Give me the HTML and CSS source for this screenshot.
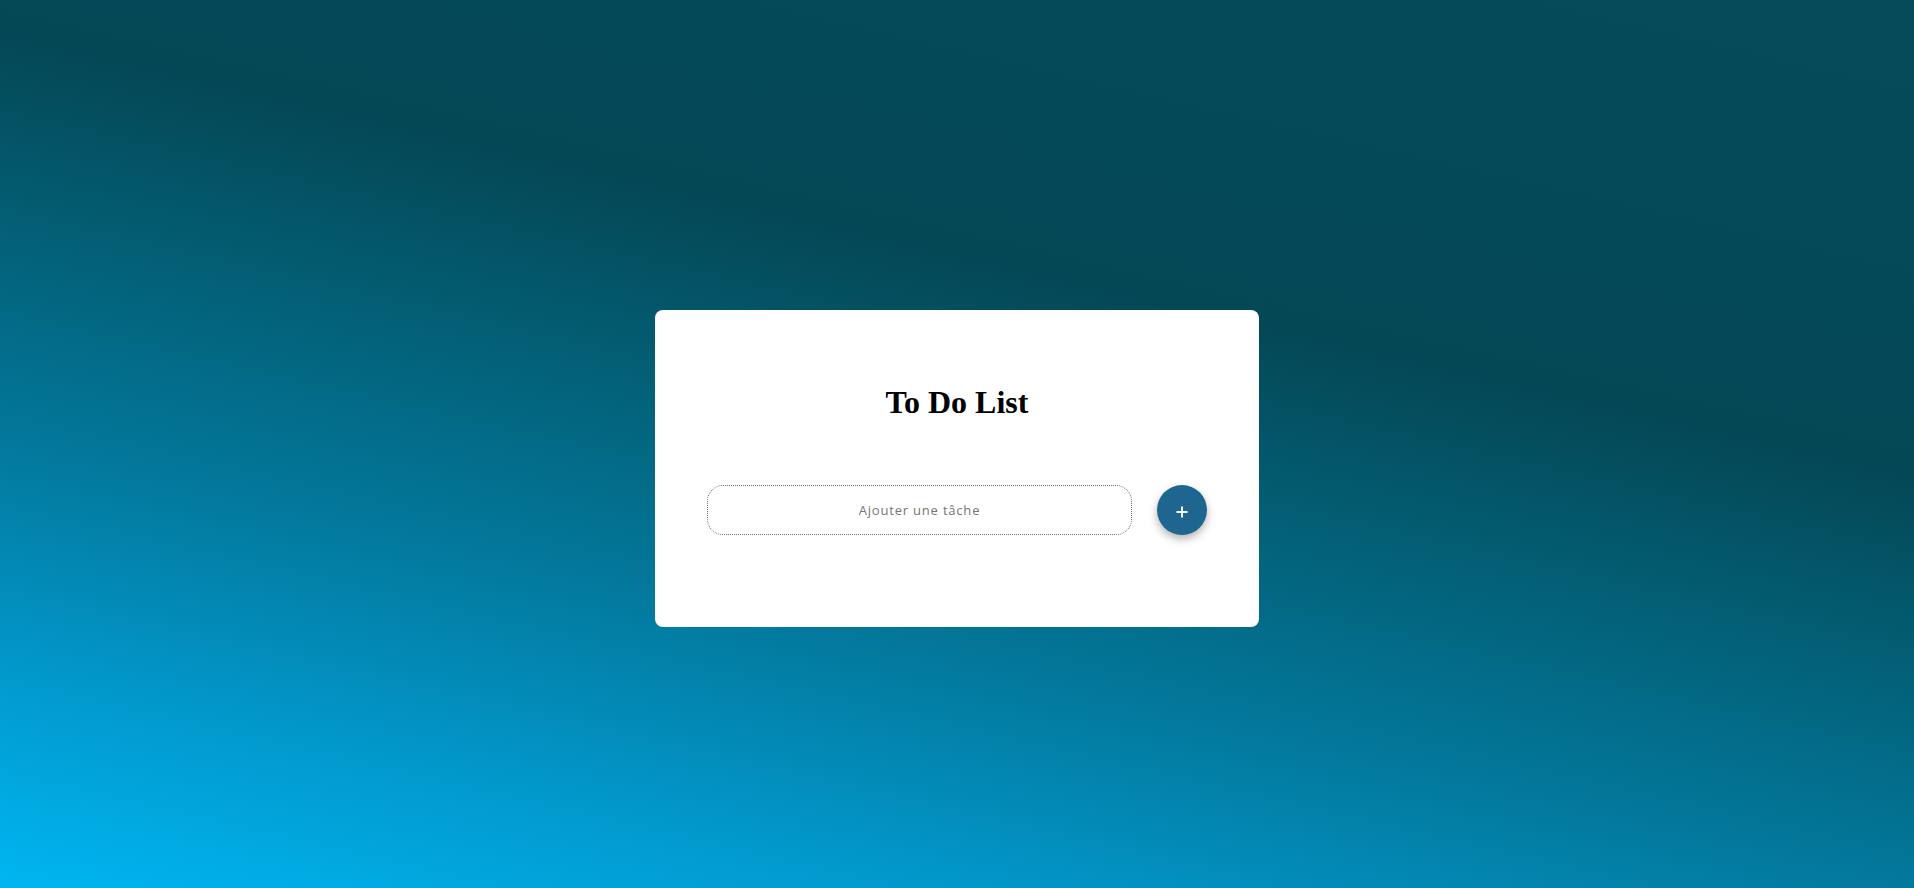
FILE: index.html
```html
<!DOCTYPE html>
<html lang="fr">
<head>
<meta charset="utf-8">
<title>To Do List</title>
<link rel="stylesheet" href="styles.css">
</head>
<body>
<main class="page">
  <section class="card">
    <h1 class="title">To Do List</h1>
    <form class="row" onsubmit="return false;">
      <input class="task-input" type="text" placeholder="Ajouter une tâche">
      <button class="add-btn" type="submit" aria-label="Ajouter">
        <svg width="12" height="12" viewBox="0 0 12 12"><path d="M6 0.5V11.5M0.5 6H11.5" stroke="#fff" stroke-width="1.8" fill="none"/></svg>
      </button>
    </form>
  </section>
</main>
</body>
</html>
```
FILE: styles.css
```css
html, body {
  margin: 0;
  height: 100%;
}
body {
  background: linear-gradient(13deg, #00b6f1 0%, #0299cd 16%, #037ba0 32%, #03627a 48%, #044856 64%, #054b5a 100%);
  font-family: "Open Sans", "Noto Sans", sans-serif;
}
.page {
  box-sizing: border-box;
  height: 100vh;
  display: flex;
  justify-content: center;
  align-items: flex-start;
  padding-top: 310px;
}
.card {
  box-sizing: border-box;
  width: 604px;
  height: 317px;
  background: #fff;
  border-radius: 8px;
  padding: 75px 52px 92px;
}
.title {
  margin: 0;
  font-family: "Liberation Serif", "Times New Roman", serif;
  font-size: 32px;
  font-weight: bold;
  line-height: 35px;
  text-align: center;
  color: #000;
}
.row {
  margin: 65px 0 0;
  display: flex;
  align-items: center;
  gap: 25px;
}
.task-input {
  box-sizing: border-box;
  width: 425px;
  height: 50px;
  border: 1px dotted #6f6f6f;
  border-radius: 16px;
  outline: none;
  text-align: center;
  font-family: "Open Sans", "Noto Sans", sans-serif;
  font-size: 13px;
  letter-spacing: 0.8px;
  color: #333;
  padding: 0 12px;
}
.task-input::placeholder {
  color: #757575;
}
.add-btn {
  width: 50px;
  height: 50px;
  border: none;
  border-radius: 50%;
  background: #1e6690;
  box-shadow: 0 4px 8px rgba(0, 0, 0, 0.3);
  display: flex;
  align-items: center;
  justify-content: center;
  padding: 0;
  cursor: pointer;
}
.add-btn svg {
  display: block;
  margin-top: 3px;
}
```
